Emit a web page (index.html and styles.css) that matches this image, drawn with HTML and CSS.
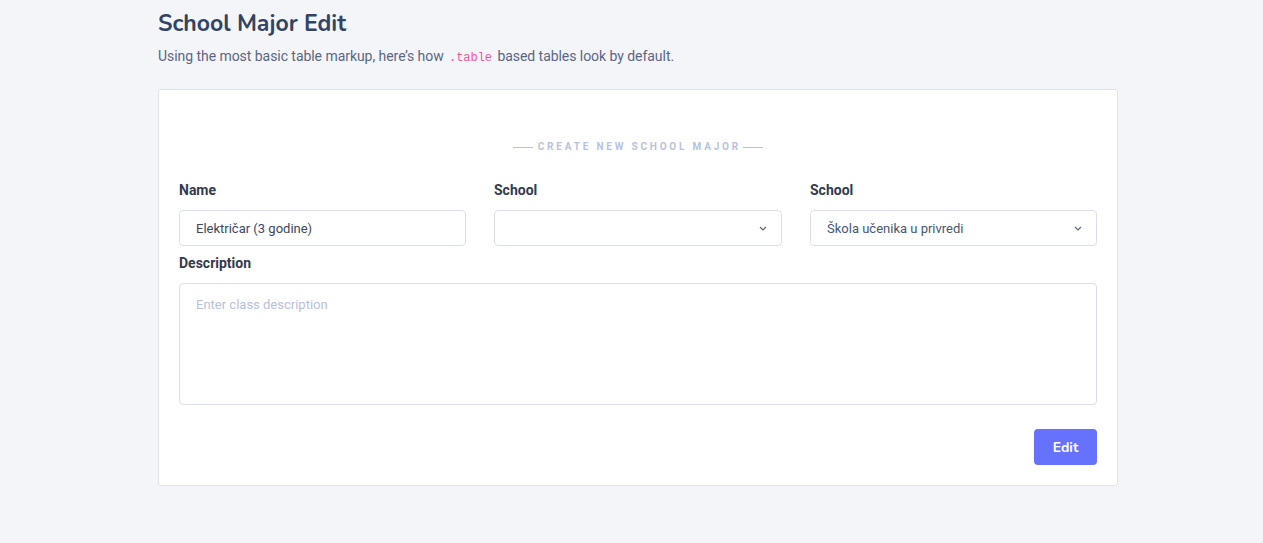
FILE: index.html
```html
<!DOCTYPE html>
<html>
<head>
<meta charset="utf-8">
<link rel="stylesheet" href="styles.css">
</head>
<body>
<div class="page">
  <h1 class="title">School Major Edit</h1>
  <p class="subtitle">Using the most basic table markup, here’s how <code>.table</code> based tables look by default.</p>
  <div class="card">
    <div class="divider"><span>CREATE NEW SCHOOL MAJOR</span></div>
    <div class="row3">
      <div class="field">
        <label>Name</label>
        <div class="input">Električar (3 godine)</div>
      </div>
      <div class="field">
        <label>School</label>
        <div class="input select"><span></span><svg width="8" height="5" viewBox="0 0 8 5"><path d="M1 1l3 3 3-3" fill="none" stroke="#5c6782" stroke-width="1.2"/></svg></div>
      </div>
      <div class="field">
        <label>School</label>
        <div class="input select"><span class="sel">Škola učenika u privredi</span><svg width="8" height="5" viewBox="0 0 8 5"><path d="M1 1l3 3 3-3" fill="none" stroke="#5c6782" stroke-width="1.2"/></svg></div>
      </div>
    </div>
    <div class="field desc">
      <label>Description</label>
      <div class="textarea">Enter class description</div>
    </div>
    <div class="actions"><button class="btn">Edit</button></div>
  </div>
</div>
</body>
</html>
```
FILE: styles.css
```css
* { box-sizing: border-box; }
html, body { margin: 0; padding: 0; }
body {
  background: #f4f5f9;
  font-family: Roboto, "Liberation Sans", sans-serif;
  color: #333a4d;
}
.page {
  width: 960px;
  margin-left: 158px;
  padding-top: 9px;
}
.title {
  font-family: "Nunito", Lato, "Open Sans", sans-serif;
  font-weight: 700;
  font-size: 23px;
  line-height: 30px;
  color: #324463;
  margin: 0;
}
.subtitle {
  margin: 8px 0 0;
  font-size: 14px;
  line-height: 18px;
  color: #5a6784;
  letter-spacing: -0.05px;
}
.subtitle code {
  font-family: "Liberation Mono", "DejaVu Sans Mono", monospace;
  font-size: 12px;
  color: #f5559a;
  padding: 0 2px;
}
.card {
  margin-top: 22px;
  background: #fff;
  border: 1px solid #dfe3ec;
  border-radius: 3px;
  padding: 50px 20px 20px;
}
.divider {
  display: flex;
  align-items: center;
  justify-content: center;
  gap: 5px;
  font-size: 10px;
  font-weight: 700;
  letter-spacing: 2.8px;
  color: #b7c3dd;
  line-height: 14px;
}
.divider::before, .divider::after {
  content: "";
  width: 20px;
  height: 1px;
  background: #b7c3dd;
}
.divider span { margin-right: -2.8px; }
.row3 {
  display: grid;
  grid-template-columns: 287px 288px 287px;
  justify-content: space-between;
  margin-top: 27px;
}
.field label {
  display: block;
  font-size: 14px;
  font-weight: 700;
  line-height: 18px;
  color: #333a4d;
  margin-bottom: 11px;
}
.input {
  height: 36px;
  border: 1px solid #dadfeb;
  border-radius: 4px;
  padding: 0 16px;
  font-size: 13px;
  color: #3d4760;
  display: flex;
  align-items: center;
}
.input.select { justify-content: space-between; padding-right: 14px; }
.input .sel { color: #4a5572; }
.desc { margin-top: 8px; }
.desc label { margin-bottom: 11px; }
.textarea {
  height: 122px;
  border: 1px solid #dadfeb;
  border-radius: 4px;
  padding: 13px 16px;
  font-size: 13px;
  line-height: 16px;
  color: #b5c1da;
}
.actions {
  display: flex;
  justify-content: flex-end;
  margin-top: 24px;
}
.btn {
  width: 63px;
  height: 36px;
  border: none;
  border-radius: 4px;
  background: #6672fb;
  color: #fff;
  font-family: "Nunito", Lato, "Open Sans", sans-serif;
  font-weight: 700;
  font-size: 14px;
}
```
